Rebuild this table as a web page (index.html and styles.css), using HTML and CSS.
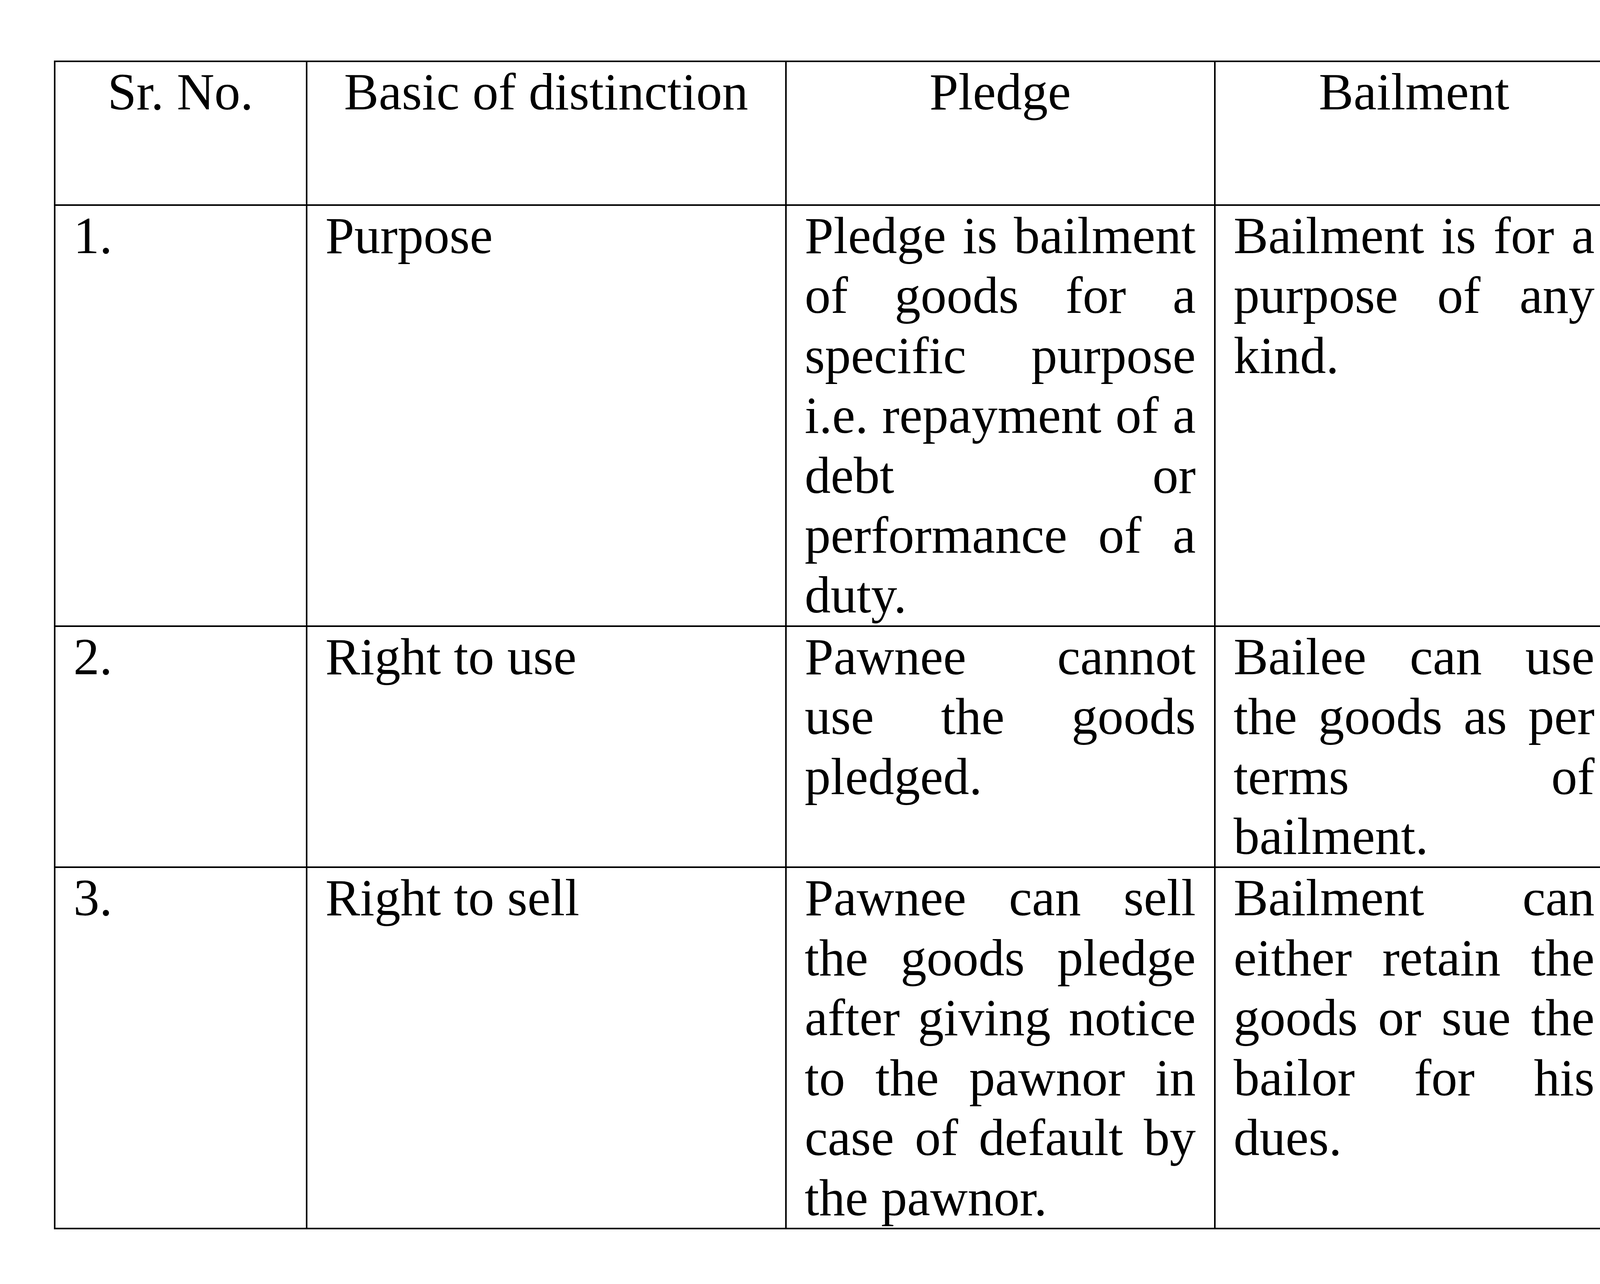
FILE: index.html
```html
<!DOCTYPE html>
<html lang="en">
<head>
<meta charset="utf-8">
<title>Pledge vs Bailment</title>
<link rel="stylesheet" href="styles.css">
</head>
<body>
<div class="table" role="table">
  <div class="cell head" role="columnheader">Sr. No.</div>
  <div class="cell head" role="columnheader">Basic of distinction</div>
  <div class="cell head" role="columnheader">Pledge</div>
  <div class="cell head" role="columnheader">Bailment</div>

  <div class="cell" role="cell">1.</div>
  <div class="cell" role="cell">Purpose</div>
  <div class="cell just" role="cell">Pledge is bailment of goods for a specific purpose i.e. repayment of a debt or performance of a duty.</div>
  <div class="cell just" role="cell">Bailment is for a purpose of any kind.</div>

  <div class="cell" role="cell">2.</div>
  <div class="cell" role="cell">Right to use</div>
  <div class="cell just" role="cell">Pawnee cannot use the goods pledged.</div>
  <div class="cell just" role="cell">Bailee can use the goods as per terms of bailment.</div>

  <div class="cell" role="cell">3.</div>
  <div class="cell" role="cell">Right to sell</div>
  <div class="cell just" role="cell">Pawnee can sell the goods pledge after giving notice to the pawnor in case of default by the pawnor.</div>
  <div class="cell just" role="cell">Bailment can either retain the goods or sue the bailor for his dues.</div>
</div>
</body>
</html>
```

FILE: styles.css
```css
html, body {
  margin: 0;
  padding: 0;
  background: #ffffff;
}

body {
  font-family: "Liberation Serif", "Times New Roman", serif;
  font-size: 133px;
  line-height: 153.4px;
  color: #000000;
}

.table {
  display: grid;
  grid-template-columns: 645px 1227px 1098px 1021px;
  width: max-content;
  margin: 155px 0 0 138px;
  border-top: 4px solid #000;
  border-left: 4px solid #000;
}

.cell {
  box-sizing: border-box;
  padding: 0 47px 0 46px;
  border-right: 4px solid #000;
  border-bottom: 4px solid #000;
}

.head {
  height: 368px;
  text-align: center;
}

.just {
  text-align: justify;
}
```
